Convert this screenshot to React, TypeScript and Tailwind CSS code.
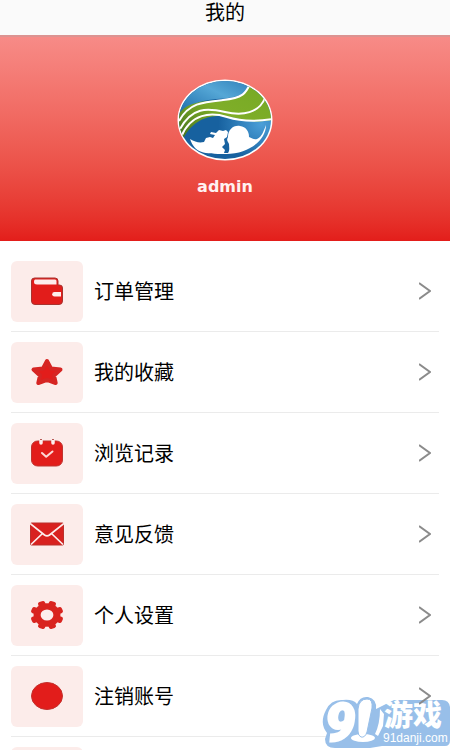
import type { ReactNode } from 'react'

interface MenuItem {
  id: string
  label: string
  icon: ReactNode
}

function WalletIcon() {
  return (
    <svg viewBox="0 0 34 30" className="h-[30px] w-[34px]" aria-hidden="true">
      <path d="M4.500 2H25a3 3 0 0 1 3 3v4h1.500a3 3 0 0 1 3 3v13a3.500 3.500 0 0 1-3.500 3.500H5A3.500 3.500 0 0 1 1.500 25V5a3 3 0 0 1 3-3z" fill="#e21d1b" stroke="#a8332f" />
      <path d="M5 3.500h20q1.500 0 1.500 1.500v3.500H7q-3 0-3-2.500 0-2.500 1-2.500z" fill="#fdeeed" />
      <path d="M31 16h-6.500a2.300 2.300 0 0 0 0 4.600H31z" fill="#fdeeed" />
    </svg>
  )
}

function StarIcon() {
  return (
    <svg viewBox="0 0 34 30" className="h-[30px] w-[34px]" aria-hidden="true">
      <path d="M17 4l4 7.500 9.500 1-6.500 6 1.700 7.500L17 22.800 8.300 26 10 18.500l-6.500-6 9.500-1z" fill="#e21d1b" stroke="#d62523" strokeWidth="4" strokeLinejoin="round" />
    </svg>
  )
}

function CalendarIcon() {
  return (
    <svg viewBox="0 0 34 30" className="h-[30px] w-[34px]" aria-hidden="true">
      <rect x="1.500" y="3" width="31" height="25" rx="6" fill="#e21d1b" stroke="#c03430" />
      <path d="M11 2.500V5M23 2.500V5" stroke="#fdeeed" strokeWidth="3.500" strokeLinecap="round" />
      <path d="M10.500 1.500h1M22.500 1.500h1" stroke="#b04a46" strokeLinecap="round" />
      <path d="M12 15l4.200 3.800 6.300-5.300" fill="none" stroke="#fdd9d7" strokeWidth="2" strokeLinecap="round" strokeLinejoin="round" />
    </svg>
  )
}

function MailIcon() {
  return (
    <svg viewBox="0 0 34 30" className="h-[30px] w-[34px]" aria-hidden="true">
      <rect x="0.500" y="4" width="33" height="22" rx="1" fill="#d8211f" stroke="#bb302c" />
      <path d="M0 4.500l14.500 11.500q2.500 1.800 5 0L34 4.500M1 25.500l11.500-11M33 25.500l-11.500-11" fill="none" stroke="#fdeeed" strokeWidth="1.700" />
    </svg>
  )
}

function GearIcon() {
  return (
    <svg viewBox="0 0 34 30" className="h-[30px] w-[34px]" aria-hidden="true">
      <g transform="translate(17 15) scale(1.140 1)" fill="#d9241f">
        <circle r="11.800" />
        {[22.5, 67.5, 112.5, 157.5, 202.5, 247.5, 292.5, 337.5].map((angle) => (
          <rect key={angle} x="-3.200" y="-14.500" width="6.400" height="7" rx="2" transform={`rotate(${angle})`} />
        ))}
        <circle r="5.600" fill="#fdeeed" />
      </g>
    </svg>
  )
}

function DotIcon() {
  return (
    <svg viewBox="0 0 34 30" className="h-[30px] w-[34px]" aria-hidden="true">
      <ellipse cx="17" cy="15" rx="15.500" ry="13.500" fill="#e21d1b" stroke="#c4302c" />
    </svg>
  )
}

function Avatar() {
  return (
    <svg viewBox="0 0 96 82" className="h-[82px] w-24" role="img" aria-label="admin">
      <defs>
        <linearGradient id="sky" x1="0" y1="1" x2="1" y2="0">
          <stop offset="0" stopColor="#1766a5" />
          <stop offset="0.600" stopColor="#55a7d6" />
          <stop offset="1" stopColor="#2f7fb8" />
        </linearGradient>
        <linearGradient id="field" x1="0" y1="1" x2="1" y2="0">
          <stop offset="0" stopColor="#3f6d1c" />
          <stop offset="0.500" stopColor="#7fae28" />
          <stop offset="1" stopColor="#76a925" />
        </linearGradient>
        <radialGradient id="sea" cx="0.880" cy="0.550" r="0.450">
          <stop offset="0" stopColor="#4b9fd8" />
          <stop offset="1" stopColor="#17619f" />
        </radialGradient>
        <clipPath id="globe">
          <ellipse cx="48" cy="41" rx="46" ry="39" />
        </clipPath>
      </defs>
      <ellipse cx="48" cy="41" rx="47.500" ry="40.500" fill="#fff" />
      <g clipPath="url(#globe)">
        <path d="M0 0h96v82H0z" fill="url(#sea)" />
        <path d="M0 0h74l-2 9C60 25 36 15 16 26L0 38z" fill="url(#sky)" />
        <path d="M0 62V38C8 22 28 22 46 21S68 15 73 5l23 12v24C80 44 72 42 58 39S20 33 6 60z" fill="url(#field)" />
        <path d="M2 42C12 24 26 23 46 21S69 14 73 5M3 50C15 28 30 29 48 33s34 1 40-14M4 58C14 34 34 33 50 38s34 4 46 2" fill="none" stroke="#fff" strokeWidth="2" />
        <path d="M13 60c5 3 9 4 14 3l2-4 4-1 3 1 2-3-5-1 1-2 5 1 3-3 4 1 3-1 2 2-1 5-3 2 1 5-3 3 3 3-1 3h4c2-3 1-6 1-9-1-3-3-3-1-7 0-7 5-12 12-11 6 1 9 5 9 11 3 1 5 3 8 2 5-2 7-9 9-14 0 15-17 29-40 29S18 74 13 60z" fill="#fff" />
      </g>
    </svg>
  )
}

function ChevronIcon() {
  return (
    <svg viewBox="0 0 12 18" className="relative z-10 h-[18px] w-3 shrink-0" aria-hidden="true">
      <path d="M0 1l11 8-11 8" fill="none" stroke="#8b8b8b" strokeWidth="2" />
    </svg>
  )
}

function SiteBadge() {
  return (
    <svg viewBox="0 0 134 54" className="pointer-events-none absolute right-0 bottom-0 h-[54px] w-[134px]" role="img" aria-label="91游戏 91danji.com">
      <path d="M10 14Q15 3 27 4q10-1 14 4 3-8 11-7 9 2 8 12l10-5 8-4h48q7 0 8 7v33q0 6-5 6H66l-12 2H19q-10 0-10-9l2-6Q3 27 10 14z" fill="#98bfe9" />
      <g fill="#fff">
        <text x="9" y="45" fontSize="54" fontStyle="italic" fontWeight="900" stroke="#fff" strokeWidth="2" fontFamily="Roboto, sans-serif">9</text>
        <ellipse cx="47" cy="42" rx="12" ry="4" />
        <path d="M51 3q6 0 5 9l-5 24q-2 6-6 5-3-1-3-6V13Q43 3 51 3z" stroke="#98bfe9" />
        <path d="M64 13l4 5-1 12-5 10-3-2q5-10 5-25z" />
        <text x="68" y="30" fontSize="29" fontWeight="900" fontFamily='"Noto Sans CJK SC", sans-serif'>游戏</text>
        <text x="67" y="46" fontSize="12" fontFamily='"Liberation Sans", sans-serif'>91danji.com</text>
      </g>
    </svg>
  )
}

const menuItems: MenuItem[] = [
  { id: 'orders', label: '订单管理', icon: <WalletIcon /> },
  { id: 'favorites', label: '我的收藏', icon: <StarIcon /> },
  { id: 'history', label: '浏览记录', icon: <CalendarIcon /> },
  { id: 'feedback', label: '意见反馈', icon: <MailIcon /> },
  { id: 'settings', label: '个人设置', icon: <GearIcon /> },
  { id: 'close-account', label: '注销账号', icon: <DotIcon /> },
]

export default function App() {
  return (
    <div className="relative h-screen overflow-hidden bg-white font-['Noto_Sans_CJK_SC',sans-serif] text-black">
      <header className="flex h-[35px] justify-center bg-[#fafafa]">
        <h1 className="text-[20px] leading-6">我的</h1>
      </header>

      <section className="flex h-[206px] flex-col items-center border-t-2 border-[#dc9391] bg-linear-to-b from-[#f78b87] to-[#e31d1a] pt-[42px]">
        <Avatar />
        <div className="mt-3.5 font-['DejaVu_Sans',sans-serif] text-[16px] leading-6 font-bold text-[#fff1f0]">admin</div>
      </section>

      <nav className="px-[11px] pt-2.5">
        <ul>
          {menuItems.map((item) => (
            <li key={item.id} className="border-b border-[#ebebeb]">
              <button type="button" className="flex h-20 w-full items-center pr-2 text-left">
                <span className="flex h-[61px] w-[72px] shrink-0 items-center justify-center rounded-md bg-[#fcecea]">
                  {item.icon}
                </span>
                <span className="ml-[11px] flex-1 text-[20px] leading-6">{item.label}</span>
                <ChevronIcon />
              </button>
            </li>
          ))}
        </ul>
        <div className="mt-2.5 h-[61px] w-[72px] rounded-md bg-[#fcecea]" />
      </nav>

      <SiteBadge />
    </div>
  )
}
